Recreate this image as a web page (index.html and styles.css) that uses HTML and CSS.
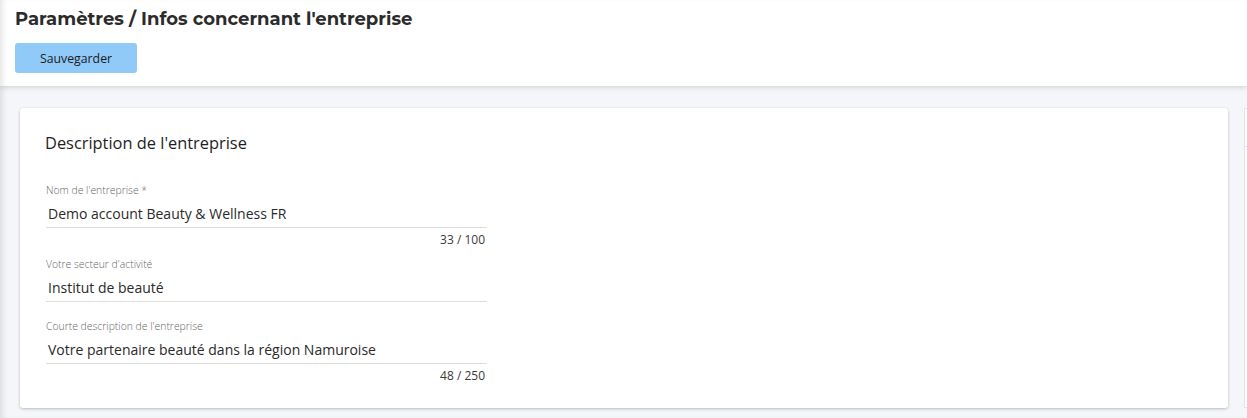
FILE: index.html
```html
<!DOCTYPE html>
<html lang="fr">
<head>
<meta charset="utf-8">
<title>Paramètres</title>
<link rel="stylesheet" href="styles.css">
</head>
<body>
<header class="topbar">
  <h1 class="page-title">Paramètres / Infos concernant l'entreprise</h1>
  <button class="btn-save" type="button">Sauvegarder</button>
</header>
<main class="content">
  <section class="card">
    <h2 class="card-title">Description de l'entreprise</h2>
    <div class="field">
      <label class="field-label">Nom de l'entreprise *</label>
      <div class="field-value">Demo account Beauty &amp; Wellness FR</div>
      <div class="field-counter">33 / 100</div>
    </div>
    <div class="field field-after-counter">
      <label class="field-label">Votre secteur d'activité</label>
      <div class="field-value">Institut de beauté</div>
    </div>
    <div class="field field-after-line">
      <label class="field-label">Courte description de l'entreprise</label>
      <div class="field-value">Votre partenaire beauté dans la région Namuroise</div>
      <div class="field-counter">48 / 250</div>
    </div>
  </section>
  <aside class="card-side">
    <div class="side-head"></div>
  </aside>
</main>
</body>
</html>
```
FILE: styles.css
```css
* { box-sizing: border-box; }
html, body { margin: 0; padding: 0; }
body {
  width: 1247px;
  height: 418px;
  overflow: hidden;
  background: #f5f6f9;
  font-family: "Open Sans", "Liberation Sans", sans-serif;
  color: #222;
}
.topbar {
  height: 86px;
  background: #fff;
  padding: 8px 15px 0 15px;
  box-shadow: 0 2px 5px rgba(0,0,0,0.12), inset 6px 0 6px -4px rgba(0,0,0,0.12);
  position: relative;
  z-index: 1;
}
.page-title {
  margin: 0;
  font-family: "Montserrat", "Inter", "Liberation Sans", sans-serif;
  font-weight: 700;
  font-size: 18px;
  line-height: 22px;
  color: #2b2b2b;
}
.btn-save {
  margin-top: 13px;
  width: 122px;
  height: 30px;
  border: none;
  border-radius: 3px;
  background: #90caf9;
  color: #1b1b1b;
  font-family: "Open Sans", "Liberation Sans", sans-serif;
  font-size: 12.3px;
  padding: 0;
}
.content {
  display: flex;
  gap: 16px;
  padding: 22px 0 0 20px;
  height: 332px;
  box-shadow: inset 6px 0 6px -4px rgba(0,0,0,0.12);
}
.card {
  flex: 0 0 1208px;
  height: 300px;
  background: #fff;
  border-radius: 3px;
  box-shadow: 0 1px 3px rgba(0,0,0,0.25);
  padding: 24px 25px 0 25px;
}
.card-title {
  margin: 0 0 29px 0;
  font-size: 16.4px;
  font-weight: 500;
  line-height: 22px;
  color: #1e1e1e;
}
.field {
  width: 441px;
  margin-left: 1px;
}
.field-label {
  display: block;
  font-size: 10.4px;
  font-weight: 300;
  line-height: 14px;
  color: #666;
}
.field-value {
  font-size: 14px;
  line-height: 20px;
  padding: 7px 0 3px 2px;
  color: #2a2a2a;
  border-bottom: 1px solid #ddd;
}
.field-counter {
  text-align: right;
  font-size: 12px;
  font-weight: 400;
  line-height: 16px;
  color: #3a3a3a;
  padding: 4px 2px 0 0;
}
.field-after-counter { margin-top: 9px; }
.field-after-line { margin-top: 17px; }
.card-side {
  flex: 1 0 auto;
  height: 300px;
  background: #fff;
  border: 1px solid #e2e4e8;
  border-right: none;
}
.side-head {
  height: 38px;
  border-bottom: 1px solid #e2e4e8;
}
```
